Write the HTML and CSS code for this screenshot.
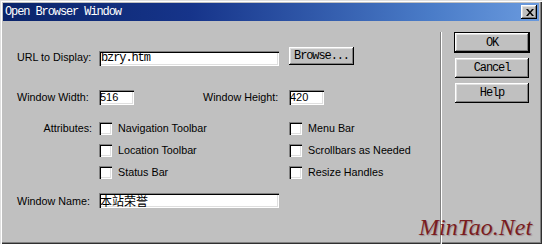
FILE: index.html
```html
<!DOCTYPE html>
<html>
<head>
<meta charset="utf-8">
<title>Open Browser Window</title>
<link rel="stylesheet" href="styles.css">
</head>
<body>
<div class="window">
  <div class="titlebar">
    <span class="title">Open Browser Window</span>
    <span class="close"><svg width="8" height="7" viewBox="0 0 8 7"><path d="M0 0h2l2 2.5L6 0h2L5 3.5 8 7H6L4 4.5 2 7H0l3-3.5z" fill="#000"/></svg></span>
  </div>
  <div class="client">
    <div class="form">
      <div class="row row-url">
        <span class="label">URL to Display:</span>
        <span class="field field-wide mono">bzry.htm</span>
        <span class="btn btn-browse">Browse...</span>
      </div>
      <div class="row row-size">
        <span class="label">Window Width:</span>
        <span class="field field-small">516</span>
        <span class="label label-height">Window Height:</span>
        <span class="field field-small">420</span>
      </div>
      <div class="row row-attrs">
        <span class="label label-attrs">Attributes:</span>
        <div class="checks">
          <div class="check"><span class="box"></span><span>Navigation Toolbar</span></div>
          <div class="check"><span class="box"></span><span>Menu Bar</span></div>
          <div class="check"><span class="box"></span><span>Location Toolbar</span></div>
          <div class="check"><span class="box"></span><span>Scrollbars as Needed</span></div>
          <div class="check"><span class="box"></span><span>Status Bar</span></div>
          <div class="check"><span class="box"></span><span>Resize Handles</span></div>
        </div>
      </div>
      <div class="row row-name">
        <span class="label">Window Name:</span>
        <span class="field field-wide cjk">本站荣誉</span>
      </div>
    </div>
    <div class="sep"></div>
    <div class="buttons">
      <span class="btn btn-side btn-default">OK</span>
      <span class="btn btn-side">Cancel</span>
      <span class="btn btn-side">Help</span>
    </div>
  </div>
  <div class="watermark">MinTao.Net</div>
</div>
</body>
</html>
```
FILE: styles.css
```css
* { box-sizing: border-box; }
html, body { margin: 0; padding: 0; }
body { background: #c0c0c0; }

.window {
  position: relative;
  width: 542px;
  height: 244px;
  background: #c0c0c0;
  box-shadow: inset 1px 1px #dfdfdf, inset 2px 2px #fff, inset -1px -1px #303030, inset -2px -2px #808080;
  font-family: "Liberation Sans", Arial, sans-serif;
  font-size: 10.75px;
  color: #000;
  overflow: hidden;
}

.titlebar {
  margin: 3px 3px 0 3px;
  height: 18px;
  background: linear-gradient(to right, #0a246a 0%, #16348a 35%, #4a7cc8 80%, #6a9ade 100%);
  display: flex;
  align-items: flex-start;
  justify-content: space-between;
  padding: 0 2px 0 2px;
}
.title {
  font-family: "Liberation Mono", "Courier New", monospace;
  font-size: 12px;
  letter-spacing: -1.1px;
  color: #fff;
  line-height: 18px;
}
.close {
  margin-top: 2px;
  width: 16px;
  height: 14px;
  background: #c0c0c0;
  box-shadow: inset -1px -1px #000, inset 1px 1px #fff, inset -2px -2px #808080, inset 2px 2px #dfdfdf;
  display: flex;
  align-items: center;
  justify-content: center;
  padding-left: 1px;
}

.client {
  display: flex;
  height: 223px;
}
.form {
  width: 440px;
  padding-left: 17px;
}
.sep {
  margin-top: 11px;
  border-left: 1px solid #808080;
  border-right: 1px solid #fff;
  height: 212px;
}
.buttons {
  margin-top: 11px;
  margin-left: 12px;
  display: flex;
  flex-direction: column;
  align-items: flex-start;
  gap: 5px;
}

.row {
  display: flex;
  align-items: flex-start;
}
.label {
  width: 82px;
  line-height: 13px;
  white-space: nowrap;
}
.row-url { margin-top: 26px; height: 18px; }
.row-url .label { margin-top: 4px; }
.row-url .field { margin-top: 4px; }
.row-size { margin-top: 25px; height: 15px; }
.row-size .label { margin-top: 1px; }
.label-height { margin-left: 69px; width: 86px; }
.row-attrs { margin-top: 17px; }
.label-attrs { text-align: right; padding-right: 7px; }
.row-name { margin-top: 14px; }
.row-name .label { margin-top: 2px; }

.field {
  display: block;
  height: 15px;
  background: #fff;
  box-shadow: inset 1px 1px #808080, inset 2px 2px #000, inset -1px -1px #fff, inset -2px -2px #dfdfdf;
  padding: 0 2px 0 2px;
  line-height: 15px;
  white-space: nowrap;
  overflow: hidden;
}
.field-wide { width: 180px; }
.field-small { width: 35px; font-size: 11px; padding-left: 1px; }
.mono {
  font-family: "Liberation Mono", "Courier New", monospace;
  font-size: 12px;
  letter-spacing: -1.1px;
}
.cjk {
  font-family: "Noto Sans CJK SC", sans-serif;
  font-size: 12px;
  line-height: 15px;
  padding-left: 1px;
}

.btn {
  display: flex;
  align-items: center;
  justify-content: center;
  background: #c0c0c0;
  box-shadow: inset -1px -1px #000, inset 1px 1px #fff, inset -2px -2px #808080, inset 2px 2px #dfdfdf;
  font-family: "Liberation Mono", "Courier New", monospace;
  font-size: 12px;
  letter-spacing: -1.1px;
}
.btn-browse {
  margin-left: 10px;
  width: 65px;
  height: 18px;
}
.btn-side {
  width: 74px;
  height: 20px;
  margin-left: 1px;
}
.btn-default {
  width: 76px;
  height: 21px;
  margin-left: 0;
  border: 1px solid #000;
}

.checks {
  display: grid;
  grid-template-columns: 190px 130px;
  row-gap: 9px;
}
.check {
  display: flex;
  align-items: flex-start;
  gap: 6px;
  line-height: 13px;
  white-space: nowrap;
}
.box {
  width: 13px;
  height: 13px;
  background: #fff;
  box-shadow: inset 1px 1px #808080, inset 2px 2px #000, inset -1px -1px #fff, inset -2px -2px #dfdfdf;
}

.watermark {
  position: absolute;
  left: 419px;
  top: 215px;
  font-family: "Liberation Serif", "Times New Roman", serif;
  font-style: italic;
  font-size: 24px;
  line-height: 24px;
  color: #7a1c1f;
  text-shadow: 1px 1px 1px rgba(60, 0, 0, 0.25);
}
```
